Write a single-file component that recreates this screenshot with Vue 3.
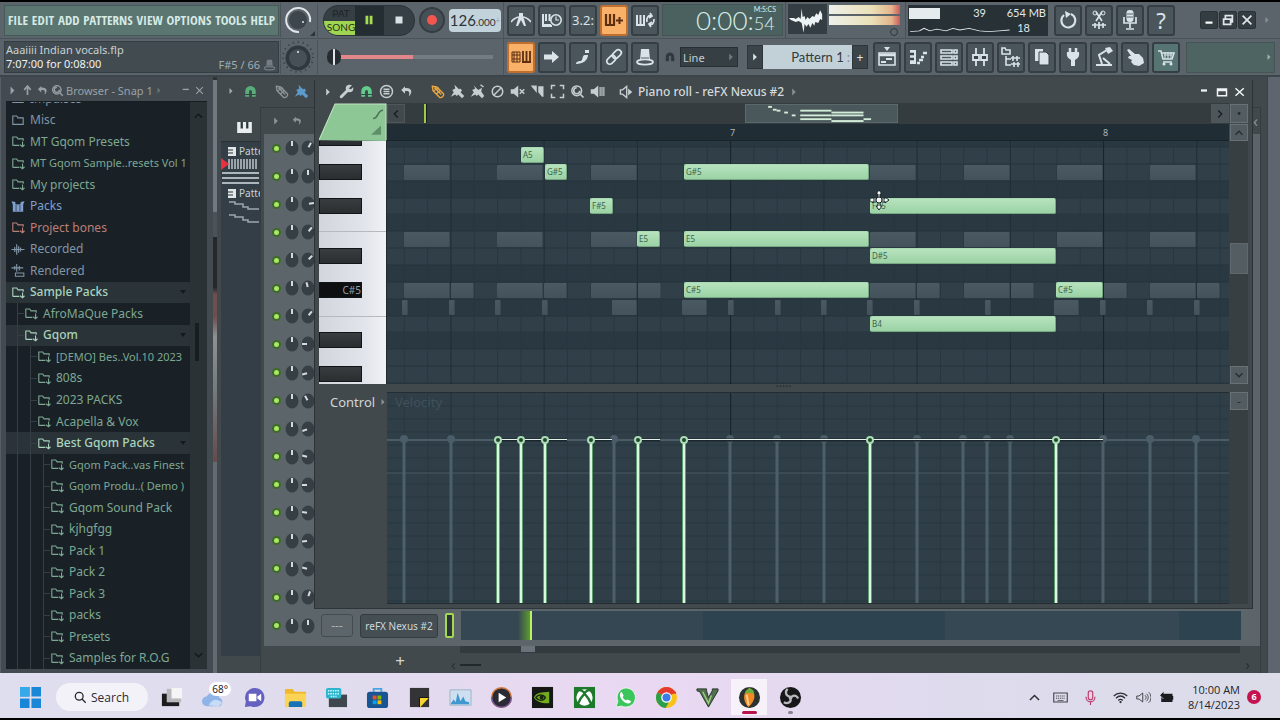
<script setup>
const menus = ['FILE', 'EDIT', 'ADD', 'PATTERNS', 'VIEW', 'OPTIONS', 'TOOLS', 'HELP']

const I = {
  arrow: '<path d="M7 4l6 6-6 6z" fill="currentColor"/>',
  up: '<path d="M10 17V4M5 9l5-6 5 6" fill="none" stroke="currentColor" stroke-width="2.6"/>',
  undo: '<path d="M8 3L3 8l5 5V9.500c5-1 7 1 5 7 6-5 4-12-5-11z" fill="currentColor"/>',
  search: '<circle cx="9" cy="9" r="6.500" fill="none" stroke="currentColor" stroke-width="2"/><path d="M14 14l4 4M9 5a4 4 0 1 0 4 4" stroke="currentColor" stroke-width="2.200" fill="none"/>',
  magnet: '<path d="M3 17V9.500a7 7 0 0 1 14 0V17h-5V10a2 2 0 0 0-4 0v7z" fill="currentColor"/><path d="M3 14h5.500M11.500 14H17" stroke="#30383c" stroke-width="1.200"/>',
  pencil: '<path d="M3 3l6 1 9 9c1 2-2 6-5 5L4 9zM6 5l9 9M5 9l7-4M9 13l5-5" fill="none" stroke="currentColor" stroke-width="1.800" stroke-linejoin="round"/>',
  brush: '<path d="M6 1l6 6 2-1 2 3-2 2 5 5-3 3-5-5-2 2-2-2-6 3 4-6-2-3 4-2z" fill="currentColor"/>',
  brush2: '<path d="M5 2l6 6 5-3-1 5 4 6-3 3-5-5-2 2-2-2-6 3 4-6-2-3 4-2z" fill="currentColor"/><path d="M14 1l4 3" stroke="currentColor" stroke-width="2"/>',
  wrench: '<path d="M3 17L12 8" stroke="currentColor" stroke-width="4" stroke-linecap="round"/><circle cx="14" cy="6" r="5" fill="currentColor"/><path d="M13 6l5-5 2 2-4 4z" fill="#40484c"/>',
  circmenu: '<circle cx="10" cy="10" r="8" fill="none" stroke="currentColor" stroke-width="2"/><path d="M6 7h8M6 10h8M6 13h8" stroke="currentColor" stroke-width="1.800"/>',
  no: '<circle cx="10" cy="10" r="7" fill="none" stroke="currentColor" stroke-width="2"/><path d="M5 15L15 5" stroke="currentColor" stroke-width="2"/>',
  mute: '<path d="M1 7h4l6-5v16l-6-5H1z" fill="currentColor"/><path d="M13 7l6 6M19 7l-6 6" stroke="currentColor" stroke-width="2"/>',
  slice: '<path d="M1 2h8v10zM11 3h7v14h-2l-5-6z" fill="currentColor"/>',
  select: '<path d="M2 7V2h5M13 2h5v5M18 13v5h-5M7 18H2v-5" fill="none" stroke="currentColor" stroke-width="2"/>',
  speaker: '<path d="M1 7h4l6-5v16l-6-5H1z" fill="currentColor"/><path d="M13.500 4v12M16 4v12M18.500 4v12" stroke="currentColor" stroke-width="1.500"/>',
  spkarrow: '<path d="M2 7h3l6-5v16l-6-5H2z" fill="none" stroke="currentColor" stroke-width="2"/><path d="M13 5l6 5-6 5z" fill="currentColor"/>',
  metro: '<path d="M8 3h4v4l1 2 2 7h-2l-3-6-3 6H5l2-7 1-2z" fill="currentColor"/><path d="M0 12c3-4 5-5 9-5M11 7c4 0 6 1 9 5" fill="none" stroke="currentColor" stroke-width="1.600"/>',
  pianoclock: '<path d="M1 4v12h9M4 4v7M7.500 4v7M1 15h8" stroke="currentColor" stroke-width="2" fill="none"/><circle cx="14" cy="10" r="5.200" fill="none" stroke="currentColor" stroke-width="1.600"/><path d="M14 6.500V10h3" stroke="currentColor" stroke-width="1.200" fill="none"/>',
  pianoplus: '<path d="M2 4v11M6 4v11M10 4v11M1 15h10" stroke="currentColor" stroke-width="2.200"/><path d="M15.500 7v7M12 10.500h7" stroke="currentColor" stroke-width="2"/>',
  pianoloop: '<path d="M2 5v10M5.500 5v10M9 5v10M1 15h9" stroke="currentColor" stroke-width="2"/><path d="M12 12c-1-5 2-7 4-6M19 9c0 5-2 6-4 5M15 3l2 3-3 2M16 17l-2-3 3-2" stroke="currentColor" stroke-width="1.700" fill="none"/>',
  listpiano: '<path d="M1 5h8v10H1zM1 8h8M1 12h8M3 5v10M6 5v10" fill="none" stroke="currentColor" stroke-width="1"/><path d="M12 4v11M15.500 4v11M19 4v11M11 15h9" stroke="currentColor" stroke-width="1.800"/>',
  right: '<path d="M2 7.500h8V4l7 6-7 6v-3.500H2z" fill="currentColor"/>',
  slide: '<path d="M3 17c0-3 4-3 5-3 2-1 1-6 4-6h3c0 5-5 9-12 9zM12 6V3h4v3z" fill="currentColor"/>',
  link: '<g transform="rotate(-45 10 10)" fill="none" stroke="currentColor" stroke-width="1.700"><rect x="1" y="7" width="10" height="6" rx="3"/><rect x="9" y="7" width="10" height="6" rx="3"/></g>',
  hat: '<path d="M6 2h8l1 11H5z" fill="currentColor"/><ellipse cx="10" cy="15" rx="8" ry="2.600" fill="none" stroke="currentColor" stroke-width="1.800"/><path d="M6 11h8" stroke="#545e63"/>',
  playlist: '<path d="M7 0h6l-3 4z" fill="currentColor"/><path d="M2 6h16v12H2z" fill="none" stroke="currentColor" stroke-width="1.600"/><path d="M2 8h16" stroke="currentColor" stroke-width="2.500"/><path d="M4 15h5M9 12h6" stroke="currentColor" stroke-width="2"/>',
  roll: '<path d="M2 3h6v14H2z" fill="currentColor"/><path d="M2 7h4M2 12h4" stroke="#39434a" stroke-width="2.400"/><path d="M9 16h3M11 13h4M13 10h3M15 6h4" stroke="currentColor" stroke-width="2.600"/>',
  rack: '<path d="M2 3h11v3H2zM2 9h11v3H2zM2 15h11v3H2zM15 3h3v3h-3zM15 9h3v3h-3zM15 15h3v3h-3z" fill="none" stroke="currentColor" stroke-width="1.600"/>',
  mixer: '<path d="M6 1v18M14 1v18" stroke="currentColor" stroke-width="1.800"/><path d="M3 8h6v5H3zM11 8h6v5h-6z" fill="#39434a" stroke="currentColor" stroke-width="1.800"/>',
  tree: '<path d="M1 1h3l1 2h4v4H1zM5 9v9h5M5 12h5" fill="none" stroke="currentColor" stroke-width="1.600"/><path d="M10 11h9M10 17h9M12 9v5M16 9v5M13 15v5M17 15v5" stroke="currentColor" stroke-width="1.600"/>',
  pages: '<path d="M3 2h8v12H3z" fill="currentColor"/><path d="M7 5h7l3 3v10H7z" fill="currentColor" stroke="#39434a"/>',
  plug: '<path d="M7 1v4M13 1v4" stroke="currentColor" stroke-width="2.500"/><path d="M4 5h12c1 6-3 7-4 8v6H8v-6C7 12 3 11 4 5z" fill="currentColor"/>',
  lamp: '<path d="M11 1l5-1 3 4-5 3z" fill="currentColor"/><path d="M13 3L5 8l3 9" stroke="currentColor" stroke-width="2" fill="none"/><path d="M2 18h16M9 11l7 6" stroke="currentColor" stroke-width="2"/>',
  hand: '<path d="M2 3l2-1 6 5 4 0 4 4 1 5-5 3-5-1-3-3 1-2-4-2 1-2 2 0z" fill="currentColor"/>',
  cart: '<path d="M2 4h3l2 8h9l2-6H6M7 15h9" fill="none" stroke="currentColor" stroke-width="1.600"/><path d="M8 8h8M9 5v7M12 5v7M15 5v7" stroke="currentColor"/><circle cx="8" cy="17" r="1.500" fill="currentColor"/><circle cx="15" cy="17" r="1.500" fill="currentColor"/>',
  reload: '<path d="M6 5a7 7 0 1 0 7-1" fill="none" stroke="currentColor" stroke-width="2.200"/><path d="M7 1l6 3-5 4z" fill="currentColor"/>',
  cut: '<path d="M7 2l6 9M13 2l-6 9M3 15h14M6 13v5M10 12v7M14 13v5" stroke="currentColor" stroke-width="1.700"/><circle cx="6" cy="3" r="2" fill="none" stroke="currentColor"/><circle cx="14" cy="3" r="2" fill="none" stroke="currentColor"/>',
  mic: '<rect x="6.500" y="0" width="7" height="12" rx="3" fill="currentColor"/><path d="M4 7v6h12V7M10 13v5M6 19h8" fill="none" stroke="currentColor" stroke-width="1.700"/><path d="M7 4h6M7 7h6" stroke="#59646a"/>',
  folder: '<path d="M2 16V3h6l2 3h8v3M2 16h10" fill="none" stroke="currentColor" stroke-width="1.700"/><path d="M17 10v8M13 15l4 3 3-3" fill="none" stroke="currentColor" stroke-width="1.700"/>',
  plain: '<path d="M2 16V3h6l2 3h8v10z" fill="none" stroke="currentColor" stroke-width="1.700"/>',
  packs: '<path d="M0 2l6 1v3l4 1 4-1V3l6-1-2 5v11H2V7z" fill="currentColor"/><path d="M7 7v10M13 7v10" stroke="#1a2228"/>',
  wave: '<path d="M0 10h20M5 6v8M8 2v16M11 5v10M14 7v6" stroke="currentColor" stroke-width="1.800"/>',
  rendered: '<path d="M0 6h18M5 3v6M8 0v12M12 3v7" stroke="currentColor" stroke-width="1.700"/><path d="M6 14h13v5H6z" fill="none" stroke="currentColor" stroke-width="1.600"/>',
}

const midTop = [['metro', 'Metronome'], ['pianoclock', 'Wait for input'], ['count', 'Countdown'], ['pianoplus', 'Overdub'], ['pianoloop', 'Loop recording']]
const midBottom = [['listpiano', 'Typing keyboard'], ['right', 'Step edit'], ['slide', 'Slide'], ['link', 'Link controllers'], ['hat', 'Hints']]
const views = [['playlist', 'Playlist'], ['roll', 'Piano roll'], ['rack', 'Channel rack'], ['mixer', 'Mixer'], ['tree', 'Browser'], ['pages', 'Plugin picker'], ['plug', 'Plugins'], ['lamp', 'Tempo tapper'], ['hand', 'Touch'], ['cart', 'Shop']]
const utils = [['reload', 'Undo'], ['cut', 'Edison'], ['mic', 'Record audio'], ['help', 'Help']]

const tree = [
  { t: 'Impulses', c: 'blue', i: 'plain', d: 0 },
  { t: 'Misc', c: 'blue', i: 'plain', d: 0 },
  { t: 'MT Gqom Presets', c: 'green', i: 'folder', d: 0 },
  { t: 'MT Gqom Sample..resets Vol 1', c: 'green', i: 'folder', d: 0, long: true },
  { t: 'My projects', c: 'green', i: 'folder', d: 0 },
  { t: 'Packs', c: 'azure', i: 'packs', d: 0 },
  { t: 'Project bones', c: 'red', i: 'folder', d: 0 },
  { t: 'Recorded', c: 'blue', i: 'wave', d: 0 },
  { t: 'Rendered', c: 'blue', i: 'rendered', d: 0 },
  { t: 'Sample Packs', c: 'open', i: 'folder', d: 0 },
  { t: 'AfroMaQue Packs', c: 'green', i: 'folder', d: 1 },
  { t: 'Gqom', c: 'open', i: 'folder', d: 1 },
  { t: '[DEMO] Bes..Vol.10 2023', c: 'green', i: 'folder', d: 2, long: true },
  { t: '808s', c: 'green', i: 'folder', d: 2 },
  { t: '2023 PACKS', c: 'green', i: 'folder', d: 2 },
  { t: 'Acapella & Vox', c: 'green', i: 'folder', d: 2 },
  { t: 'Best Gqom Packs', c: 'open', i: 'folder', d: 2 },
  { t: 'Gqom Pack..vas Finest', c: 'green', i: 'folder', d: 3, long: true },
  { t: 'Gqom Produ..( Demo )', c: 'green', i: 'folder', d: 3, long: true },
  { t: 'Gqom Sound Pack', c: 'green', i: 'folder', d: 3 },
  { t: 'kjhgfgg', c: 'green', i: 'folder', d: 3 },
  { t: 'Pack 1', c: 'green', i: 'folder', d: 3 },
  { t: 'Pack 2', c: 'green', i: 'folder', d: 3 },
  { t: 'Pack 3', c: 'green', i: 'folder', d: 3 },
  { t: 'packs', c: 'green', i: 'folder', d: 3 },
  { t: 'Presets', c: 'green', i: 'folder', d: 3 },
  { t: 'Samples for R.O.G', c: 'green', i: 'folder', d: 3 },
]

const channels = [30, 0, 80, 40, 45, -15, 40, -90, -105, -30, -110, -75, -90, -80, -95, -75, 20, 0]

const rollTools = [['wrench', 'Tools'], ['magnet', 'Snap', 'on'], ['circmenu', 'Stamp'], ['undo', 'Undo']]
const drawTools = [['pencil', 'Draw', 'gold'], ['brush', 'Paint'], ['brush2', 'Paint sequence'], ['no', 'Delete'], ['mute', 'Mute'], ['slice', 'Slice'], ['select', 'Select'], ['search', 'Zoom'], ['speaker', 'Playback']]

/* The canvas is 842 units wide: one bar is 373 units, one row is about 17 px */
const SPAN = 842
const pct = (v) => (v / SPAN) * 100 + '%'
const rowTop = (r) => Math.round(6 + r * 16.85)
const rows = [1, 1, 0, 1, 0, 1, 1, 0, 1, 0, 1, 0, 1, 1, 0].map((light, r) => ({ light, y: rowTop(r) }))
const blacks = [-1, 1, 3, 6, 8, 11, 13]
const lines = Array.from({ length: 36 }, (_, i) => ({
  x: 17.3 + i * 23.31,
  beat: i % 4 === 2,
  bar: i === 14 || i === 30,
}))
const notes = [
  ['A5', 0, 134, 23], ['G#5', 1, 158, 22], ['F#5', 3, 203, 23], ['E5', 5, 250, 23],
  ['G#5', 1, 297, 185], ['E5', 5, 297, 185], ['C#5', 8, 297, 185],
  ['F#5', 3, 483, 186], ['D#5', 6, 483, 186], ['B4', 10, 483, 186], ['C#5', 8, 669, 47],
]
const ghosts = []
for (const k of [0, 1, 2, 5, 6, 7, 8]) {
  const x = 17 + Math.round(k * 93.25)
  ghosts.push([1, x, 46], [5, x, 46], [8, x, 46], [8, x + 47, 23])
}
for (const x of [15, 62, 108, 155, 341, 388, 434, 480, 527, 598, 713, 760, 807]) ghosts.push([9, x, 6])
for (const x of [225, 295, 667]) ghosts.push([9, x, 25])

const dimStems = [17, 64, 227, 343, 390, 437, 530, 576, 600, 623, 716, 763, 809]
const stems = [111, 134, 158, 204, 251, 297, 483, 669]
const spans = [[111, 180], [204, 225], [251, 273], [297, 716]]
const hlines = Array.from({ length: 16 }, (_, i) => 13 + i * 13)

const mini = [[20, 1, 4], [25, 4, 4], [29, 5, 4], [37, 7, 4], [45, 10, 4], [54, 5, 33], [54, 10, 33], [54, 14, 33], [87, 7, 34], [87, 10, 34], [87, 16, 34], [121, 14, 8]]

const apps = [
  ['Task view', '<path d="M2 8h18v13H2z" fill="#1d1d1f"/><path d="M7 3h15v14H7z" fill="#b9b9bd"/><path d="M12 2h11v11H12z" fill="#f5f5f5"/>'],
  ['Weather', '<path d="M6 21a5 5 0 0 1 0-10 7 7 0 0 1 13 1 5 5 0 0 1 1 9z" fill="#8fb4e8"/><path d="M8 20c5-8 9-6 14-3-1 3-3 4-5 4z" fill="#c7dcf5"/>'],
  ['Chat', '<path d="M12 2a10 10 0 1 1-4 19l-6 1 1-6A10 10 0 0 1 12 2z" fill="#6461c0"/><path d="M6 8h8v8H6zM15 11l4-3v8l-4-3z" fill="#fff"/>'],
  ['File Explorer', '<path d="M1 3h8l2 3h12v16H1z" fill="#f0b82c"/><path d="M1 8h22v14H1z" fill="#fbd455"/><path d="M5 22v-4q0-2 2-2h10q2 0 2 2v4z" fill="#1673b8"/>'],
  ['Remote keyboard', '<path d="M4 9h19v13H4z" fill="#3f464d"/><rect x="1" y="2" width="16" height="11" rx="2" fill="#2cb5cf"/><path d="M3 5h12M3 8h12M6 11h6" stroke="#d5fbff" stroke-width="1.500" stroke-dasharray="1.500 1"/>'],
  ['Microsoft Store', '<path d="M8 6V3h8v3" fill="none" stroke="#4ea4df" stroke-width="2"/><rect x="1" y="6" width="22" height="17" rx="3" fill="#195592"/><path d="M7 10h4v4H7z" fill="#f25022"/><path d="M12 10h4v4h-4z" fill="#7fba00"/><path d="M7 15h4v4H7z" fill="#00a4ef"/><path d="M12 15h4v4h-4z" fill="#ffb900"/>'],
  ['Sticky Notes', '<path d="M2 2h20v20H2z" fill="#343436"/><path d="M12 12h10l-9 10h-1z" fill="#f7d531"/><path d="M12 22V12h10" fill="none" stroke="#111"/>'],
  ['Monitor', '<path d="M1 4h22v16H1z" fill="#cddff0" stroke="#9fb4c6"/><path d="M2 18l3-4 2 3 2-10 3 9 3-5 2 5 4 1v2H2z" fill="#3f97cf"/>'],
  ['Media Player', '<circle cx="12" cy="12" r="11" fill="#d2793d"/><path d="M12 23a11 11 0 0 1-11-11h22a11 11 0 0 1-11 11z" fill="#7d5a9c"/><circle cx="12" cy="12" r="9.500" fill="#2b2b33"/><path d="M9 7l8 5-8 5z" fill="#fff"/>'],
  ['NVIDIA', '<path d="M1 1h22v22H1z" fill="#151815"/><path d="M3 12c3-6 8-5 16-6v12c-6 0-12 0-16-6z" fill="#71ad1d"/><path d="M5 12c3-4 8-3 10 0-2 4-7 4-10 0z" fill="#71ad1d" stroke="#1c2812" stroke-width="1.500"/><circle cx="11" cy="12" r="2" fill="#1c2812"/>'],
  ['Xbox', '<path d="M1 1h22v22H1z" fill="#1d7a2b"/><circle cx="12" cy="12" r="8.500" fill="#fff"/><path d="M6 4c3 0 5 2 6 3 1-1 3-3 6-3M5 19c2-5 5-9 7-11 2 2 5 6 7 11" fill="none" stroke="#1d7a2b" stroke-width="2.400"/>'],
  ['WhatsApp', '<path d="M12 2a10 10 0 1 1-4 19l-6 1 2-6A10 10 0 0 1 12 2z" fill="#3bc55c" stroke="#e9f8ec"/><path d="M8 6l2 4-1 2 3 3 2-1 4 2c-2 4-6 2-9-1S5 8 8 6z" fill="#fff"/>'],
  ['Chrome', '<circle cx="12" cy="12" r="11" fill="#fbc116"/><path d="M12 12L2.500 6.500A11 11 0 0 1 21.500 6.500z" fill="#e33b2e"/><path d="M2.500 6.500A11 11 0 0 0 11 23l5-9z" fill="#2c9f4b"/><path d="M12 7h10" stroke="#e33b2e" stroke-width="2"/><circle cx="12" cy="12" r="5.500" fill="#fff"/><circle cx="12" cy="12" r="4.200" fill="#3a7de8"/>'],
  ['GTA', '<path d="M1 3h10v2l2 7 4-7V3h6v2L13 22 4 6 1 5z" fill="#50704e" stroke="#26332a"/><path d="M7 6l6 12 3-8" fill="none" stroke="#9ccf7b" stroke-width="1.500"/>'],
  ['FL Studio', '<circle cx="12" cy="12" r="11" fill="#2c3230"/><path d="M7 8c3-3 9-3 10 1 1 5-3 10-6 13-3-3-6-9-4-14z" fill="#f28a24"/><path d="M9 9c1 4 1 7 2 11" stroke="#ffd08a" stroke-width="2" fill="none"/><path d="M7 8C8 3 10 5 12 1c1 3 5 1 5 8-3-2-7-2-10-1z" fill="#6fae3a"/>'],
  ['OBS', '<circle cx="12" cy="12" r="11" fill="#18181a"/><path d="M9 3c-3 3-2 7 2 8M20 13c-2-4-6-4-8 0M5 17c4 2 8 0 7-4" fill="none" stroke="#b9b9bd" stroke-width="2.400"/><circle cx="12" cy="12" r="2" fill="#b9b9bd"/>'],
]
</script>

<template>
  <div class="screen">
    <header class="top">
      <div class="bar">
        <nav class="menu" aria-label="Main menu">
          <button v-for="m in menus" :key="m">{{ m }}</button>
        </nav>
        <button class="dial" aria-label="Main volume">
          <svg viewBox="0 0 34 34"><circle cx="16" cy="17" r="9" fill="#3c464b" /><path d="M17 29A12 12 0 1 1 28 19" fill="none" stroke="#dfe5e8" stroke-width="2" /><circle cx="21" cy="19" r="1" fill="#dfe5e8" /><path d="M33 28v5h-5z" fill="#2b3338" /></svg>
        </button>
        <div class="transport">
          <div class="deck">
            <div class="mode"><button class="pat">PAT</button><button class="song">SONG</button></div>
            <button class="pause" aria-label="Pause"><svg viewBox="0 0 20 20"><path d="M5 4h4v12H5zM11 4h4v12h-4z" fill="#a5dc51" /></svg></button>
            <button class="stop" aria-label="Stop"><svg viewBox="0 0 20 20"><path d="M5 5h10v10H5z" fill="#d9e2e6" /></svg></button>
          </div>
          <button class="rec" aria-label="Record"><i></i></button>
          <button class="tempo">126<small>.000</small><span>÷</span></button>
        </div>
        <div class="tools">
          <button v-for="[n, l] in midTop" :key="n" class="tool" :class="{ lit: n === 'pianoplus' }" :aria-label="l">
            <b v-if="n === 'count'">3.2:</b>
            <svg v-else viewBox="0 0 20 20" v-html="I[n]"></svg>
          </button>
        </div>
        <div class="clock">
          <span class="big">0:00:</span>
          <div class="frac"><span class="unit">M:S:CS</span><span class="small">54</span></div>
        </div>
        <div class="scope">
          <svg class="wave" viewBox="0 0 40 30"><path d="M1 14h5l2 1 3-2 2 2 1-11 1 9 2-1 1 4 2-3 2 2 3-3 2 1 2-4 2 2 2-5 2 4v6l-2-1-2 4-3-1-1 4-2-3-2 5-2-4-2 3-2-3-1 9-2-10-3-2-3 1-5-2z" fill="#edf2f4" /></svg>
          <div class="meters"><i></i><i></i><span></span></div>
        </div>
        <div class="cpu">
          <i class="load"></i><span class="n1">39</span><span class="n2">654 MB</span><span class="n3">18</span>
          <svg viewBox="0 0 90 12" preserveAspectRatio="none"><path d="M1 8l8-1 4-3 5 3 6-2 8 2 6-3 6 2 8-2 9 3 8 1 9-1 9-1" fill="none" stroke="#e5ecee" stroke-width="1" /></svg>
        </div>
        <div class="tools utils">
          <button v-for="[n, l] in utils" :key="n" class="tool" :aria-label="l">
            <b v-if="n === 'help'" class="q">?</b>
            <svg v-else viewBox="0 0 20 20" v-html="I[n]"></svg>
          </button>
        </div>
        <div class="winctl">
          <button aria-label="Minimize"><svg viewBox="0 0 16 16"><path d="M4 11h8" stroke="#fff" stroke-width="2.500" /></svg></button>
          <button aria-label="Restore"><svg viewBox="0 0 16 16"><path d="M3 7h8v6H3zM5 6V3h8v7h-2" fill="none" stroke="#dfe6e9" stroke-width="2" /></svg></button>
          <button aria-label="Close"><svg viewBox="0 0 16 16"><path d="M3 3l10 10M13 3L3 13" stroke="#dfe6e9" stroke-width="2" /></svg></button>
        </div>
        <svg class="end" viewBox="0 0 20 20" v-html="I.arrow"></svg>
      </div>
      <div class="bar">
        <div class="hint">
          <p>Aaaiiii Indian vocals.flp</p>
          <p>7:07:00 for 0:08:00</p>
          <span>F#5 / 66 <svg viewBox="0 0 20 20" v-html="I.hat"></svg></span>
        </div>
        <button class="dial" aria-label="Main pitch">
          <svg viewBox="0 0 34 34"><circle cx="16" cy="17" r="15" fill="none" stroke="#343d42" stroke-width="2" stroke-dasharray="1 4" /><circle cx="16" cy="18" r="12.500" fill="#2f383d" /><circle cx="16" cy="18" r="9" fill="#465056" /><circle cx="16" cy="12" r="1" fill="#e6ecef" /></svg>
        </button>
        <div class="shuttle"><input type="range" aria-label="Song position" min="0" max="100" value="0"></div>
        <div class="tools">
          <button v-for="[n, l] in midBottom" :key="n" class="tool" :class="{ lit: n === 'listpiano' }" :aria-label="l"><svg viewBox="0 0 20 20" v-html="I[n]"></svg></button>
        </div>
        <div class="snap">
          <svg viewBox="0 0 20 20" v-html="I.magnet"></svg>
          <label><select aria-label="Snap"><option>Line</option></select><svg viewBox="0 0 20 20" v-html="I.arrow"></svg></label>
        </div>
        <div class="pattern">
          <button aria-label="Pattern menu"><svg viewBox="0 0 20 20" v-html="I.arrow"></svg></button>
          <button class="name">Pattern 1<span>:</span></button>
          <button aria-label="Add pattern">+</button>
        </div>
        <div class="tools views">
          <button v-for="[n, l] in views" :key="n" class="tool" :class="{ teal: n === 'cart' }" :aria-label="l"><svg viewBox="0 0 20 20" v-html="I[n]"></svg></button>
        </div>
        <div class="news"><svg viewBox="0 0 20 20" v-html="I.arrow"></svg></div>
      </div>
    </header>

    <main class="work">
      <aside class="browser">
        <div class="bhead">
          <svg viewBox="0 0 20 20" v-html="I.arrow"></svg><svg viewBox="0 0 20 20" v-html="I.up"></svg><svg viewBox="0 0 20 20" v-html="I.undo"></svg><svg viewBox="0 0 20 20" v-html="I.search"></svg>
          <h2>Browser - Snap 1</h2>
          <svg class="faint" viewBox="0 0 20 20" v-html="I.arrow"></svg>
          <button aria-label="Minimize browser"><svg viewBox="0 0 20 20"><path d="M5 8h11" stroke="currentColor" stroke-width="2.500" /></svg></button>
          <button aria-label="Close browser"><svg viewBox="0 0 20 20"><path d="M4 4l12 12M16 4L4 16" stroke="currentColor" stroke-width="2" /></svg></button>
        </div>
        <div class="bbody">
          <div class="clip">
            <ul>
              <li v-for="n in tree" :key="n.t" :class="[n.c, { long: n.long }]">
                <i v-for="g in n.d" :key="g" class="guide" :class="{ tick: g === n.d }"></i>
                <button><svg viewBox="0 0 20 20" v-html="I[n.i]"></svg>{{ n.t }}</button>
                <em v-if="n.c === 'open'"></em>
              </li>
            </ul>
          </div>
          <div class="bscroll">
            <svg viewBox="0 0 12 8"><path d="M2 6l4-4 4 4" fill="none" stroke="#12181b" stroke-width="1.500" /></svg>
            <i></i>
            <svg viewBox="0 0 12 8"><path d="M2 2l4 4 4-4" fill="none" stroke="#12181b" stroke-width="1.500" /></svg>
          </div>
        </div>
      </aside>
      <div class="splitter"><i></i><span></span><i class="more"></i></div>

      <section class="desk">
        <div class="playlist">
          <div class="phead">
            <svg viewBox="0 0 20 20" v-html="I.arrow"></svg>
            <svg class="mag" viewBox="0 0 20 20" v-html="I.magnet"></svg>
            <svg class="pen" viewBox="0 0 20 20" v-html="I.pencil"></svg>
            <svg class="bru" viewBox="0 0 20 20" v-html="I.brush"></svg>
          </div>
          <svg class="keysicon" viewBox="0 0 16 12"><path d="M0 0h16v12H0z" fill="#e9edef" /><path d="M5 0v7M11 0v7" stroke="#2f383c" stroke-width="2.500" /></svg>
          <div class="picker">
            <p><svg viewBox="0 0 8 9"><path d="M0 0h8v9H0z" fill="#e2e7e9" /><path d="M0 3h5M0 6h5" stroke="#2a3338" /></svg>Pattern 1</p>
            <svg viewBox="0 0 38 28"><path d="M8 1v10M11 1v10M14 1v10M17 1v10M20 1v10M23 1v10M26 1v10M29 1v10M32 1v10M35 1v10" stroke="#9aa4a9" stroke-width="2" /><path d="M1 15h37M1 20h37M1 25h37" stroke="#adb6ba" stroke-width="2" /><path d="M0 0l8 6-8 6z" fill="#e8313f" /></svg>
            <p><svg viewBox="0 0 8 9"><path d="M0 0h8v9H0z" fill="#e2e7e9" /><path d="M0 3h5M0 6h5" stroke="#2a3338" /></svg>Pattern 2</p>
            <svg viewBox="0 0 38 28"><path d="M8 2h6v2h8v3h5v2h11M8 15h6v2h8v3h5v2h11" fill="none" stroke="#9aa7ad" stroke-width="1.500" /></svg>
          </div>
        </div>

        <section class="rack">
          <div class="rhead"><svg viewBox="0 0 20 20" v-html="I.arrow"></svg><svg viewBox="0 0 20 20" v-html="I.undo"></svg><span>‹</span></div>
          <div class="rbody">
            <div v-for="(a, i) in channels" :key="i" class="chan">
              <input type="checkbox" checked :aria-label="'Channel ' + (i + 1)">
              <svg viewBox="0 0 14 16"><ellipse cx="7" cy="8" rx="6.500" ry="7.500" fill="#353f44" /><path d="M7 1v5" stroke="#d4dbde" stroke-width="2" /></svg>
              <svg viewBox="0 0 14 16"><ellipse cx="7" cy="8" rx="6.500" ry="7.500" fill="#353f44" /><path d="M7 2v5" stroke="#d4dbde" stroke-width="2" :transform="'rotate(' + a + ' 7 8)'" /></svg>
              <template v-if="i === channels.length - 1">
                <button class="route">---</button>
                <button class="instr">reFX Nexus #2</button>
                <i class="sel"></i>
                <div class="clipbar"><i></i></div>
              </template>
            </div>
          </div>
          <div class="rscroll"><i></i></div>
          <div class="rfoot"><button aria-label="Add channel">+</button><span>‹</span><i></i><span class="last">›</span></div>
        </section>

        <section class="piano">
          <div class="ptitle">
            <svg class="sm" viewBox="0 0 20 20" v-html="I.arrow"></svg>
            <button v-for="[n, l, c] in rollTools" :key="n" :class="c" :aria-label="l"><svg viewBox="0 0 20 20" v-html="I[n]"></svg></button>
            <i></i>
            <button v-for="[n, l, c] in drawTools" :key="n" :class="c" :aria-label="l"><svg viewBox="0 0 20 20" v-html="I[n]"></svg></button>
            <i></i>
            <svg class="ic" viewBox="0 0 20 20" v-html="I.spkarrow"></svg>
            <h2>Piano roll - reFX Nexus #2</h2>
            <svg class="sm dimmed" viewBox="0 0 20 20" v-html="I.arrow"></svg>
            <div class="pctl">
              <button aria-label="Minimize piano roll"><svg viewBox="0 0 16 16"><path d="M4 6h8" stroke="#f0f4f5" stroke-width="3" /></svg></button>
              <button aria-label="Maximize piano roll"><svg viewBox="0 0 16 16"><path d="M2 4h12v9H2zM2 6h12" fill="none" stroke="#f0f4f5" stroke-width="2" /></svg></button>
              <button aria-label="Close piano roll"><svg viewBox="0 0 16 16"><path d="M2 3l11 10M13 3L2 13" stroke="#f0f4f5" stroke-width="2" /></svg></button>
            </div>
          </div>
          <div class="pgrid">
            <div class="corner"><svg viewBox="0 0 68 37" preserveAspectRatio="none"><path d="M0 36L16 1h51v36z" fill="#8ec796" /><path d="M0 36L16 1h51v35" fill="none" stroke="#bfe6c3" /><path d="M54 15c6 0 4-8 10-8" fill="none" stroke="#4c7355" stroke-width="1.500" /><path d="M62 22v9h-10z" fill="#5f8f69" /></svg></div>
            <div class="over">
              <button aria-label="Scroll left"><svg viewBox="0 0 16 16"><path d="M10 4L6 8l4 4" fill="none" stroke="#171d20" stroke-width="1.500" /></svg></button>
              <i class="mark"></i>
              <div class="view"><svg viewBox="0 0 153 18"><rect v-for="(m, i) in mini" :key="i" :x="m[0]" :y="m[1]" :width="m[2]" height="2" fill="#d3ecd7" /></svg></div>
              <button class="r" aria-label="Scroll right"><svg viewBox="0 0 16 16"><path d="M6 4l4 4-4 4" fill="none" stroke="#171d20" stroke-width="1.500" /></svg></button>
            </div>
            <button class="sq dot" aria-label="Zoom">•</button>
            <div class="ruler"><span :style="{ left: pct(343) }">7</span><span :style="{ left: pct(716) }">8</span></div>
            <button class="sq" aria-label="Scroll up"><svg viewBox="0 0 16 16"><path d="M4 10l4-4 4 4" fill="none" stroke="#252e32" stroke-width="1.500" /></svg></button>
            <div class="keys">
              <i v-for="b in blacks" :key="b" :style="{ top: rowTop(b) + 'px' }"><span v-if="b === 8">C#5</span></i>
              <u v-for="r in [5, 10]" :key="'u' + r" :style="{ top: rowTop(r) + 'px' }"></u>
            </div>
            <div class="canvas">
              <svg class="lines">
                <template v-for="r in rows" :key="r.y">
                  <rect v-if="r.light" x="0" :y="r.y" width="100%" height="17" fill="#313f49" />
                  <line x1="0" x2="100%" :y1="r.y" :y2="r.y" stroke="#26343c" />
                </template>
                <line v-for="l in lines" :key="l.x" :x1="pct(l.x)" :x2="pct(l.x)" y1="0" y2="100%" :stroke="l.bar ? '#16232a' : l.beat ? '#202e36' : '#293740'" />
              </svg>
              <i v-for="(g, i) in ghosts" :key="i" class="ghost" :style="{ top: rowTop(g[0]) + 1 + 'px', left: pct(g[1]), width: pct(g[2]) }"></i>
              <div v-for="(n, i) in notes" :key="'n' + i" class="note" :style="{ top: rowTop(n[1]) + 'px', left: pct(n[2]), width: pct(n[3]) }">{{ n[0] }}</div>
              <svg class="cursor" viewBox="0 0 20 20"><path d="M10 0l3 4h-2v5h5V7l4 3-4 3v-2h-5v5h2l-3 4-3-4h2v-5H4v2l-4-3 4-3v2h5V4H7z" fill="#f5f8f6" stroke="#1b2629" stroke-width="1" /><circle cx="10" cy="10" r="3" fill="#f5f8f6" stroke="#1b2629" /></svg>
            </div>
            <div class="vbar"><i></i><button class="sq" aria-label="Scroll down"><svg viewBox="0 0 16 16"><path d="M4 6l4 4 4-4" fill="none" stroke="#252e32" stroke-width="1.500" /></svg></button></div>
            <div class="grip">·····</div>
            <div class="ctl"><button>Control<svg viewBox="0 0 20 20" v-html="I.arrow"></svg></button></div>
            <div class="vel">
              <svg>
                <line v-for="h in hlines" :key="h" x1="0" x2="100%" :y1="h" :y2="h" stroke="#293841" />
                <line v-for="l in lines" :key="l.x" :x1="pct(l.x)" :x2="pct(l.x)" y1="0" y2="100%" :stroke="l.bar ? '#16232a' : l.beat ? '#24323a' : '#2a3840'" />
                <line x1="0" x2="100%" y1="80" y2="80" stroke="#465962" />
                <line x1="0" x2="100%" y1="47" y2="47" stroke="#4a5d66" stroke-width="2" />
                <g v-for="d in dimStems" :key="'d' + d"><line :x1="pct(d)" :x2="pct(d)" y1="47" y2="100%" stroke="#4d6069" stroke-width="3" /><circle :cx="pct(d)" cy="46" r="4" fill="#4a5d68" /></g>
                <line v-for="s in spans" :key="'s' + s[0]" :x1="pct(s[0])" :x2="pct(s[1])" y1="47" y2="47" stroke="#1b272c" stroke-width="3" />
                <line v-for="s in spans" :key="'w' + s[0]" class="crisp" :x1="pct(s[0])" :x2="pct(s[1])" y1="46" y2="46" stroke="#e4efe9" />
                <g v-for="d in stems" :key="'g' + d">
                  <line :x1="pct(d)" :x2="pct(d)" y1="50" y2="100%" stroke="#5c9c6c" stroke-width="4" />
                  <line :x1="pct(d)" :x2="pct(d)" y1="50" y2="100%" stroke="#d9f8df" stroke-width="2" />
                  <circle :cx="pct(d)" cy="47" r="3" fill="#23442f" stroke="#a9dcb3" stroke-width="2" />
                </g>
              </svg>
              <span>Velocity</span>
            </div>
            <div class="vbar2"><button class="sq" aria-label="Collapse">-</button></div>
          </div>
        </section>
      </section>
      <div class="edge"></div>
    </main>

    <footer class="taskbar">
      <button class="start" aria-label="Start"><svg viewBox="0 0 22 22"><path d="M0 0h10v10H0zM12 0h10v10H12zM0 12h10v10H0zM12 12h10v10H12z" fill="#1a86d8" /><path d="M0 0h10v10H0z" fill="#36a9e8" /></svg></button>
      <label class="search"><svg viewBox="0 0 20 20"><circle cx="8" cy="8" r="6" fill="none" stroke="#26262c" stroke-width="2" /><path d="M12 12l6 6" stroke="#26262c" stroke-width="2" /></svg><input type="text" placeholder="Search" aria-label="Search"></label>
      <div class="apps">
        <button v-for="[n, s] in apps" :key="n" :class="{ active: n === 'FL Studio', run: n === 'OBS' }" :aria-label="n">
          <svg viewBox="0 0 24 24" v-html="s"></svg>
          <span v-if="n === 'Weather'">68°</span>
        </button>
      </div>
      <div class="tray">
        <svg viewBox="0 0 20 20"><path d="M3 14l7-7 7 7" fill="none" stroke="#2c2c33" stroke-width="2.200" /></svg>
        <svg viewBox="0 0 20 20"><path d="M1 4h18v12H1z" fill="none" stroke="#44444c" stroke-width="1.500" /><path d="M4 8h12M4 11h12" stroke="#44444c" stroke-width="1.500" stroke-dasharray="1.500 1" /><path d="M6 14h8" stroke="#44444c" /></svg>
        <svg viewBox="0 0 20 20"><rect x="7" y="1" width="6" height="12" rx="3" fill="#ecd3de" stroke="#b8386c" stroke-width="1.500" /><path d="M4 9c0 9 12 9 12 0M10 16v4" fill="none" stroke="#b8386c" stroke-width="1.500" /></svg>
        <svg viewBox="0 0 20 20"><path d="M1 8c5-5 13-5 18 0M4 11c4-4 8-4 12 0M7 14c2-2 4-2 6 0" fill="none" stroke="#2c2c33" stroke-width="1.600" /><circle cx="10" cy="16" r="1.500" fill="#2c2c33" /></svg>
        <svg viewBox="0 0 20 20"><path d="M1 8h3l5-4v12l-5-4H1zM12 7c2 2 2 4 0 6M14 5c3 3 3 7 0 10M17 3c4 4 4 10 0 14" fill="none" stroke="#44444c" stroke-width="1.300" /></svg>
        <svg viewBox="0 0 20 20"><path d="M4 6h13v9H4z" fill="#1c1c20" stroke="#1c1c20" stroke-width="2" /><path d="M18 8v5" stroke="#1c1c20" stroke-width="2" /><path d="M6 2L1 7l5 5" fill="#1c1c20" stroke="#e0dcea" /></svg>
        <time>10:00 AM<br>8/14/2023</time>
        <b>6</b>
      </div>
    </footer>
  </div>
</template>

<style>
body { margin: 0; background: #000; }
</style>

<style scoped>
* { box-sizing: border-box; }
.screen { height: 100vh; padding: 2px 0; background: #000; display: flex; flex-direction: column; overflow: hidden; font-family: "Noto Sans", "Open Sans", sans-serif; font-size: 12px; color: #c9d2d6; }
button { border: 0; padding: 0; margin: 0; background: none; color: inherit; font: inherit; display: flex; align-items: center; justify-content: center; }
svg { display: block; flex: none; }
p, h2 { margin: 0; font-weight: 400; }
ul { list-style: none; margin: 0; padding: 0; }

.top { flex: none; background: #5a646a; border-bottom: 2px solid #3c4549; }
.bar { display: flex; align-items: center; height: 37px; padding-right: 5px; border-bottom: 1px solid #4a5358; }
.bar:last-child { height: 36px; border: 0; }
.menu { width: 275px; height: 31px; margin-left: 4px; padding: 0 3px; background: #5b7571; border: 1px solid #465a59; display: flex; align-items: center; justify-content: space-between; font-family: "Open Sans Condensed", "Noto Sans", sans-serif; font-size: 13px; color: #d6eae5; }
.dial { width: 38px; height: 34px; margin: 0 1px; border-left: 1px solid #4a5358; border-right: 1px solid #4a5358; }
.dial svg { width: 34px; height: 34px; }
.transport { width: 185px; height: 36px; display: flex; align-items: center; gap: 4px; padding-left: 4px; border-right: 1px solid #4a5358; }
.deck { width: 92px; height: 31px; border-radius: 15px; background: #353f44; border: 1px solid #2a3338; display: flex; overflow: hidden; }
.mode { width: 31px; display: flex; flex-direction: column; font-family: "Lato", "Noto Sans", sans-serif; font-size: 10px; line-height: 13px; }
.mode button { padding-left: 3px; }
.pat { height: 15px; color: #1c2428; }
.song { height: 14px; background: #a0d552; color: #23321a; }
.pause { width: 29px; background: #232d32; }
.stop { width: 31px; }
.deck svg { width: 14px; height: 14px; }
.rec { width: 26px; height: 26px; border-radius: 50%; background: #465056; border: 2px solid #343d42; flex: none; }
.rec i { width: 10px; height: 10px; border-radius: 50%; background: #f2564e; }
.tempo { width: 52px; height: 23px; border-radius: 4px; background: #c3d3dc; color: #2b353a; font-family: "Lato", "Noto Sans", sans-serif; font-size: 15px; flex: none; }
.tempo small { font-size: 10px; padding-top: 4px; }
.tempo span { font-size: 8px; color: #85939b; }
.tools { display: flex; gap: 3px; padding-left: 3px; }
.tool { width: 28px; height: 31px; border: 2px solid #343e43; border-radius: 3px; background: #4b565c; color: #d9e3e8; }
.tool svg { width: 20px; height: 20px; }
.tool b { font-weight: 400; font-size: 13px; }
.tool .q { font-size: 22px; }
.lit { background: #f9b068; border-color: #c06f2e; color: #5c2f10; }
.teal { background: #567472; }
.clock { flex: 1; height: 32px; margin-left: 3px; background: #4b615f; border: 1px solid #435653; display: flex; justify-content: flex-end; align-items: flex-end; padding: 0 6px 0 0; color: #d6efe8; font-family: "Lato", "Noto Sans", sans-serif; font-weight: 300; }
.big { font-size: 26px; line-height: 30px; }
.frac { display: flex; flex-direction: column; padding-bottom: 3px; }
.small { font-size: 18px; line-height: 18px; }
.unit { font-size: 7px; line-height: 9px; font-weight: 400; }
.scope { width: 121px; height: 36px; margin-left: 2px; border-left: 1px solid #465056; border-right: 1px solid #465056; display: flex; padding: 2px 5px 2px 2px; gap: 2px; }
.wave { width: 39px; height: 30px; background: #343e42; }
.meters { flex: 1; position: relative; }
.meters i { display: block; height: 9px; margin: 1px 0 2px; background: linear-gradient(90deg, #eef0ea, #ebe0b8 60%, #e5b48c 88%, #c95b5b); }
.meters span { position: absolute; right: 2px; bottom: 0; width: 8px; height: 8px; border: 1px solid #2e383c; border-radius: 50%; }
.cpu { width: 140px; height: 31px; margin-left: 2px; background: #273136; position: relative; font-family: "Lato", "Noto Sans", sans-serif; font-size: 11px; line-height: 14px; color: #e2eaed; display: grid; grid-template-columns: 78px 1fr; justify-items: end; padding: 1px 2px 0 0; }
.load { position: absolute; left: 1px; top: 3px; width: 31px; height: 11px; background: #e6ecee; }
.cpu svg { position: absolute; left: 1px; bottom: 1px; width: 104px; height: 10px; }
.n3 { grid-column: 2; margin-right: 16px; }
.utils { padding-left: 6px; }
.winctl { display: flex; gap: 1px; margin-left: 25px; }
.winctl button { width: 18px; height: 18px; background: #343d42; border: 1px solid #293236; border-radius: 2px; }
.winctl svg { width: 14px; height: 14px; }
.end { width: 10px; height: 12px; margin: 0 3px 0 6px; color: #88949b; }
.hint { width: 275px; height: 32px; margin-left: 4px; padding: 1px; background: #424b50; border: 1px solid #343d42; position: relative; font-size: 11px; line-height: 14px; color: #c8d1d5; }
.hint p:nth-child(2) { color: #eef2f4; }
.hint span { position: absolute; right: 2px; bottom: 0; display: flex; gap: 3px; color: #a2adb2; }
.hint svg { width: 13px; height: 14px; color: #737d82; }
.shuttle { width: 185px; height: 36px; position: relative; border-right: 1px solid #4a5358; padding: 0 10px 0 8px; display: flex; align-items: center; }
.shuttle input { appearance: none; width: 100%; height: 4px; margin: 0; background: linear-gradient(90deg, #e2868a 52%, #737c83 52%); }
.shuttle input::-webkit-slider-thumb { appearance: none; width: 14px; height: 16px; border-radius: 7px; background: linear-gradient(90deg, #262d31 40%, #dfe4e6 42%, #dfe4e6 56%, #262d31 58%); }
.snap { display: flex; align-items: center; width: 88px; gap: 4px; padding-left: 5px; color: #30393d; }
.snap svg { width: 12px; height: 14px; }
.snap label { display: flex; align-items: center; width: 58px; height: 20px; background: #363f44; border: 1px solid #282f33; color: #707a7f; }
.snap select { appearance: none; flex: 1; min-width: 0; border: 0; padding: 0 2px; background: none; color: #c5ced2; font: 11px "Noto Sans", sans-serif; }
.pattern { display: flex; height: 24px; width: 121px; color: #dfe6e9; flex: none; }
.pattern button { width: 16px; background: #3a4449; border: 1px solid #2d363a; }
.pattern svg { width: 12px; height: 12px; }
.pattern .name { flex: 1; background: #c2d0d8; color: #313b40; font-family: "Lato", "Noto Sans", sans-serif; font-size: 13px; justify-content: flex-end; border: 0; padding-right: 2px; }
.name span { margin-left: 3px; color: #83919a; }
.views { flex: none; padding-left: 5px; }
.news { flex: 1; height: 31px; margin-left: 6px; background: #4e6462; border: 1px solid #435653; display: flex; align-items: center; justify-content: flex-end; color: #9db1af; }
.news svg { width: 10px; height: 12px; }

.work { flex: 1; min-height: 0; display: flex; background: #434b50; }
.browser { width: 213px; flex: none; background: #434b50; border-left: 1px solid #565f65; display: flex; flex-direction: column; padding: 2px 6px 4px 5px; }
.bhead { height: 22px; flex: none; display: flex; align-items: center; color: #98a1a6; }
.bhead > svg { width: 13px; height: 13px; margin-right: 2px; }
.bhead h2 { flex: none; width: 88px; font-size: 11px; white-space: nowrap; }
.bhead .faint { width: 10px; color: #697277; margin-right: 14px; }
.bhead button { width: 14px; }
.bhead button svg { width: 11px; height: 11px; }
.bbody { flex: 1; min-height: 0; display: flex; background: #2a3236; border-top: 1px solid #171d21; }
.clip { flex: 1; min-width: 0; overflow: hidden; display: flex; flex-direction: column; justify-content: flex-end; background: #192127; }
.clip ul { height: 581px; flex: none; display: grid; grid-auto-rows: 1fr; }
li { display: flex; align-items: center; padding-left: 5px; color: #7da792; position: relative; white-space: nowrap; }
li button { font-size: 12px; line-height: 20px; }
li.long button { font-size: 11px; }
li svg { width: 14px; height: 13px; margin-right: 5px; }
li.blue { color: #8295a5; }
li.azure { color: #7f9fce; }
li.red { color: #bb7f76; }
li.open { background: #293338; color: #a9d3bd; }
li.open button { font-weight: 500; }
.guide { width: 13px; align-self: stretch; border-left: 1px solid #333f44; flex: none; margin-left: 6px; margin-right: -6px; }
.guide.tick { background: linear-gradient(#333f44, #333f44) 0 50% / 6px 1px no-repeat; }
li em { position: absolute; right: 4px; border: 3px solid transparent; border-top: 4px solid #131a1d; border-bottom: 0; }
.bscroll { width: 17px; display: flex; flex-direction: column; justify-content: space-between; align-items: center; position: relative; padding: 10px 0; }
.bscroll svg { width: 11px; height: 8px; }
.bscroll i { position: absolute; right: 8px; top: 39%; width: 4px; height: 38px; background: #171d20; }
.splitter { width: 4px; flex: none; padding-top: 3px; display: flex; flex-direction: column; background: #2d3438; }
.splitter i { height: 132px; background: #717a80; }
.splitter span { height: 250px; background: linear-gradient(#4a5358 10%, #22282b 10% 30%, #6e4f4e 33% 42%, #8c9192 50%, #767d80 70%, #654b4b); }
.splitter .more { flex: 1; height: auto; background: #626b71; }
.edge { width: 13px; flex: none; background: #5d666e; border-left: 1px solid #3b4347; }

.desk { flex: 1; min-width: 0; position: relative; background: #42494d; }
.playlist { width: 97px; height: 100%; padding: 3px 0 17px 4px; display: flex; flex-direction: column; }
.phead { height: 22px; display: flex; align-items: center; color: #a3acb0; flex: none; padding-left: 5px; }
.phead svg { width: 15px; height: 15px; }
.phead svg:first-child { width: 10px; height: 12px; margin-right: 7px; }
.phead .mag { color: #58ad79; margin-right: 16px; }
.phead .pen { color: #8b9499; margin-right: 5px; }
.phead .bru { color: #5b9bcb; }
.keysicon { width: 15px; height: 11px; margin: 20px 0 8px 16px; }
.picker { flex: 1; width: 39px; overflow: hidden; background: #343e47; padding-top: 2px; border-top: 1px solid #293137; }
.picker p { height: 14px; line-height: 14px; font-size: 10px; white-space: nowrap; padding-left: 7px; display: flex; align-items: center; }
.picker svg { width: 38px; height: 28px; }
.picker p svg { width: 8px; height: 9px; margin-right: 3px; }

.rack { position: absolute; left: 43px; right: 6px; top: 30px; bottom: 0; background: #42494d; border: solid #343c40; border-width: 1px 1px 0; display: flex; flex-direction: column; }
.rhead { height: 26px; flex: none; display: flex; align-items: center; justify-content: flex-start; gap: 9px; padding: 0 2px 0 9px; color: #8c959a; }
.rhead svg { width: 12px; height: 12px; }
.rhead span { margin-left: auto; font-size: 16px; }
.rbody { flex: 1; min-height: 0; margin-left: 3px; padding-bottom: 6px; background: #5c656a; display: flex; flex-direction: column; }
.chan { flex: 1; display: flex; align-items: center; padding-left: 8px; padding-right: 19px; }
.chan input { appearance: none; width: 9px; height: 9px; margin: 0 4px 0 0; border-radius: 50%; background: #a9e66a; border: 2px solid #3d6b27; flex: none; }
.chan svg { width: 14px; height: 16px; margin-right: 2px; }
.route { width: 32px; height: 23px; margin: 0 7px 0 4px; border: 1px solid #434c51; border-radius: 3px; color: #a9b2b6; flex: none; }
.instr { width: 78px; height: 24px; background: #454e53; border: 1px solid #343c40; border-radius: 3px; font-size: 10px; color: #d0d7da; flex: none; white-space: nowrap; }
.sel { width: 9px; height: 25px; margin: 0 7px; border: 2px solid #a3d850; border-radius: 2px; background: #2a3338; flex: none; }
.clipbar { flex: 1; height: 29px; background: linear-gradient(90deg, #354752 0 31%, #2e4350 31% 62%, #364854 62% 92%, #2e4350 92%); }
.clipbar i { display: block; height: 100%; width: 14px; margin-left: 57px; background: linear-gradient(90deg, transparent, #5c9b2f 85%, #b9f16b 86%); }
.rscroll { height: 7px; flex: none; margin: 0 20px 0 199px; background: #343b3f; }
.rscroll i { display: block; width: 14px; height: 6px; margin-left: 61px; background: #6a7379; }
.rfoot { height: 20px; flex: none; display: flex; align-items: flex-start; padding-left: 129px; padding-right: 10px; color: #282f33; }
.rfoot button { width: 20px; color: #cfd6d9; font-size: 17px; line-height: 15px; margin-right: 41px; }
.rfoot i { width: 21px; height: 2px; background: #22292d; margin: 11px 0 0 4px; }
.rfoot span { font-size: 15px; line-height: 22px; }
.rfoot .last { margin-left: auto; }

.piano { position: absolute; left: 97px; right: 14px; top: 3px; bottom: 64px; background: #42494c; border-left: 1px solid #2c3336; border-right: 1px solid #2c3336; border-bottom: 1px solid #2f3639; display: flex; flex-direction: column; }
.ptitle { height: 23px; flex: none; display: flex; align-items: center; padding: 0 3px; color: #c6ced2; }
.ptitle button { width: 20px; height: 20px; flex: none; }
.ptitle button svg { width: 15px; height: 15px; }
.ptitle > i { width: 11px; }
.ptitle .sm { width: 12px; height: 12px; margin: 0 2px 0 4px; }
.ptitle .ic { width: 14px; height: 14px; margin-right: 5px; margin-left: 1px; }
.ptitle .on { color: #62cb8d; }
.ptitle .gold { color: #eba740; }
.ptitle h2 { font-size: 12px; font-weight: 500; color: #d3dadd; white-space: nowrap; }
.ptitle .dimmed { color: #858e93; }
.pctl { display: flex; margin-left: auto; }
.ptitle .pctl button { width: 18px; }
.ptitle .pctl svg { width: 12px; height: 12px; }
.pgrid { flex: 1; min-height: 0; padding: 0 4px 4px; display: grid; grid-template-columns: 68px minmax(0, 1fr) 19px; grid-template-rows: 21px 17px minmax(0, 1fr) 8px 212px; }
.corner { grid-row: span 2; }
.corner svg { width: 68px; height: 38px; }
.over { background: #343c40; display: flex; align-items: center; position: relative; }
.over button { width: 18px; height: 19px; background: #41494d; border: 1px solid #4e575b; }
.over button svg { width: 14px; height: 14px; }
.over .r { position: absolute; right: 0; background: #4d565a; }
.mark { width: 3px; height: 19px; margin-left: 19px; background: #9dcb45; border-right: 1px solid #171d20; }
.view { position: absolute; left: 42%; margin-left: 4px; width: 153px; height: 19px; background: #4a585c; border: 1px solid #5b686c; }
.view svg { width: 151px; height: 17px; }
.sq { width: 18px; height: 18px; margin-left: 1px; background: #535c60; border: 1px solid #687175; color: #252e32; }
.sq svg { width: 14px; height: 14px; }
.dot { height: 19px; align-self: center; }
.ruler { background: #202d34; position: relative; border-bottom: 1px solid #17242a; }
.ruler span { position: absolute; font-size: 9px; line-height: 17px; color: #aab5ba; }
.ruler + .sq { height: 17px; }
.keys { position: relative; overflow: hidden; background: linear-gradient(90deg, #d2d6dc, #e2e5eb 70%, #f0f2f6); border-right: 1px solid #222b30; }
.keys i { position: absolute; left: 0; width: 43px; height: 16px; background: linear-gradient(#3a3d40, #2b2e30); border: 1px solid #121517; font-style: normal; text-align: right; font-size: 10px; line-height: 14px; color: #989ea1; }
.keys i:nth-child(5) { background: #0d0f10; }
.keys u { position: absolute; left: 0; right: 0; height: 1px; background: #b6babf; }
.canvas { position: relative; overflow: hidden; background: #293841; }
.lines { width: 100%; height: 100%; }
.ghost { position: absolute; height: 15px; background: linear-gradient(#4a5962, #43525b); border-radius: 1px; border-right: 1px solid #3a4952; }
.note { position: absolute; height: 16px; border-radius: 2px; background: linear-gradient(#b6e3bd, #9bd2a5); border: 1px solid #a8dbb1; border-right-color: #76a881; border-bottom-color: #76a881; font-size: 8px; line-height: 14px; color: #40644a; padding-left: 1px; overflow: hidden; }
.cursor { position: absolute; left: 57%; margin-left: 2px; top: 49px; width: 20px; height: 20px; }
.crisp { shape-rendering: crispEdges; }
.vbar, .vbar2 { background: #373f42; display: flex; flex-direction: column; justify-content: flex-end; position: relative; }
.vbar2 { justify-content: flex-start; }
.vbar i { position: absolute; left: 1px; top: 42%; width: 18px; height: 31px; background: #545d61; border: 1px solid #5f686c; }
.grip { grid-column: 1 / -1; text-align: center; line-height: 6px; color: #252c2f; }
.ctl { padding: 0 0 0 11px; }
.ctl button { font-size: 13px; line-height: 20px; color: #d0d7da; }
.ctl svg { width: 10px; height: 10px; margin-left: 3px; color: #8a9398; }
.vel { position: relative; background: #2f3e47; border: solid #242d31; border-width: 1px 0; }
.vel svg { width: 100%; height: 100%; }
.vel span { position: absolute; left: 8px; top: 0; font-size: 13px; line-height: 18px; color: #41515a; }

.taskbar { height: 45px; flex: none; display: flex; align-items: center; padding: 3px 19px 0 20px; background: linear-gradient(90deg, #dfdeee, #e0dcee 25%, #ead8f2 50%, #dedbed 75%, #dbdce8); color: #25252c; }
.start svg { width: 21px; height: 21px; }
.search { display: flex; align-items: center; gap: 4px; width: 92px; height: 28px; margin: 0 3px 0 15px; padding-left: 18px; border-radius: 14px; background: #f4f2f9; flex: none; }
.search svg { width: 13px; height: 13px; }
.search input { width: 46px; border: 0; padding: 0; background: none; font: 12px "Open Sans", sans-serif; outline: 0; }
.search input::placeholder { color: #2b2b32; opacity: 1; }
.apps { width: 660px; flex: none; display: grid; grid-auto-flow: column; grid-auto-columns: 1fr; }
.apps button { height: 36px; position: relative; }
.apps svg { width: 23px; height: 23px; }
.apps span { position: absolute; left: 17px; top: 3px; background: #fff; border-radius: 8px; font-size: 10px; line-height: 14px; padding: 0 3px; }
.apps .active { background: linear-gradient(#f7f1fa, #f7f1fa) center / 36px 36px no-repeat; }
.active::after { content: ""; position: absolute; bottom: 1px; width: 15px; height: 3px; border-radius: 2px; background: #b8134a; }
.run::after { content: ""; position: absolute; bottom: 1px; width: 5px; height: 3px; border-radius: 2px; background: #8a8590; }
.tray { margin-left: auto; display: flex; align-items: center; }
.tray svg { width: 15px; height: 15px; margin-right: 8px; }
.tray svg:nth-child(1) { width: 13px; margin-right: 12px; }
.tray svg:nth-child(2), .tray svg:nth-child(3) { margin-right: 15px; }
.tray time { font: 11px/15px "Open Sans", sans-serif; text-align: right; margin: 0 7px 0 6px; }
.tray b { width: 14px; height: 14px; border-radius: 50%; background: #c41450; color: #fff; font-size: 9px; line-height: 14px; text-align: center; }
</style>
